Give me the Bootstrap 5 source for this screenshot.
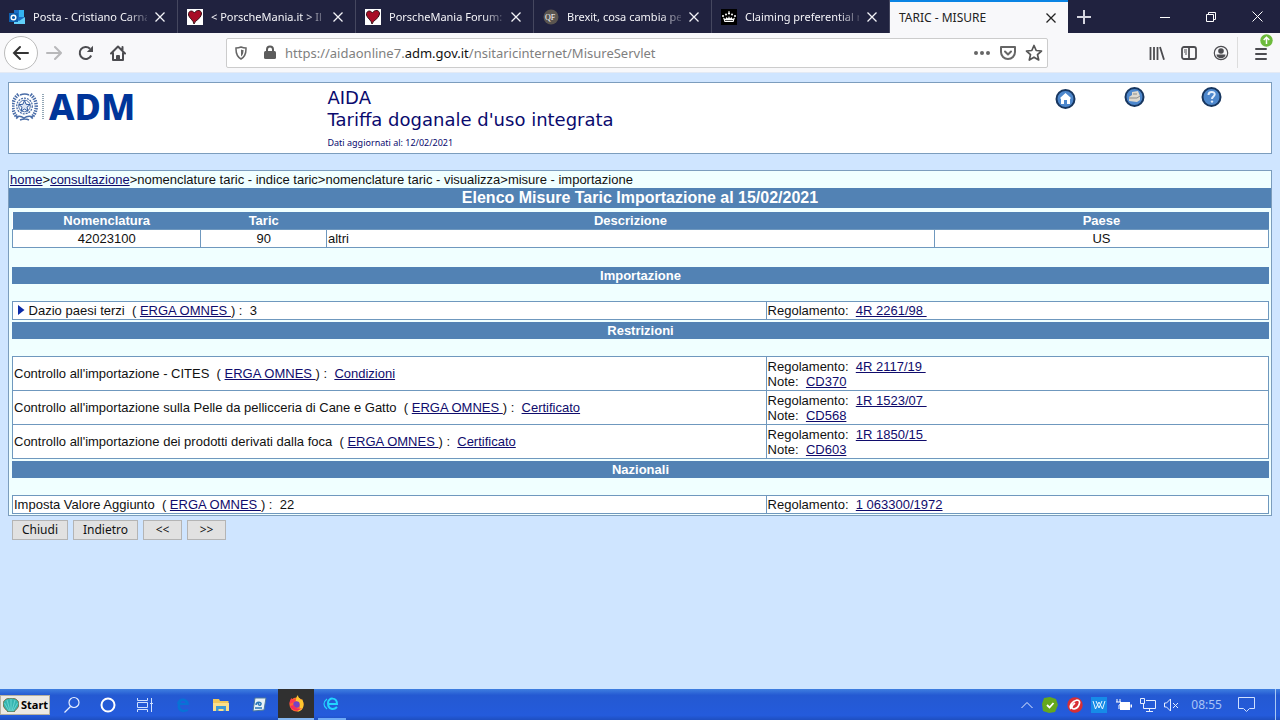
<!DOCTYPE html>
<html lang="it">
<head>
<meta charset="utf-8">
<meta name="viewport" content="width=device-width, initial-scale=1">
<title>TARIC - MISURE</title>
<link href="https://cdn.jsdelivr.net/npm/bootstrap@5.3.0/dist/css/bootstrap.min.css" rel="stylesheet">
<style>
  body { background: #cfe5ff; font: 13px/15px "Liberation Sans", Arial, sans-serif; color: #111; }
  button { font: inherit; color: inherit; }
  svg { display: block; flex: none; }
  .ui-font { font-family: "Noto Sans", "Segoe UI", sans-serif; }

  /* browser tabs */
  .tab-strip { background: #20223f; height: 33px; color: #f4f4f8; font-size: 11px; line-height: 16px; }
  .tab-item { flex: 0 1 178px; min-width: 0; padding: 0 12px 0 9px; border-right: 1px solid #45475f; }
  .tab-item.current { background: #f8f8fa; color: #222; border: 0; border-top: 2px solid #0a84e4; font-size: 12px; }
  .tab-title { flex: 1 1 0; min-width: 0; white-space: nowrap; -webkit-mask-image: linear-gradient(90deg, #000 82%, #0003); mask-image: linear-gradient(90deg, #000 82%, #0003); }
  .current .tab-title { -webkit-mask-image: none; mask-image: none; }
  .plain-btn { background: none; border: 0; padding: 0; display: flex; align-items: center; justify-content: center; }
  .win-btn { width: 46px; }

  /* address bar */
  .tool-bar { background: #f8f8fa; height: 40px; color: #4c4c50; border-bottom: 1px solid #e4eaf4; }
  .back-btn { width: 34px; height: 34px; border: 1px solid #bbb; border-radius: 50%; background: #fff; }
  .url-box { flex: 0 1 822px; min-width: 0; height: 30px; background: #fff; border: 1px solid #ccc; border-radius: 2px; color: #666; }
  .url-text { font-size: 13px; line-height: 20px; color: #808080; white-space: nowrap; }
  .url-text b { font-weight: 400; color: #111; }
  .divider { width: 1px; align-self: stretch; background: #ddd; }
  .update-dot { top: -12px; left: 6px; }

  /* page */
  .page-body { padding: 9px 8px 0; }
  .box-line { border: 1px solid #7c9dbd; }
  .site-head { background: #fff; height: 72px; color: #0a0a6e; font-family: "DejaVu Sans", Verdana, sans-serif; }
  .logo-col { width: 25%; padding: 10px 0 0 3px; }
  .logo-text { font: 800 36px/28px "Noto Sans", "Open Sans", sans-serif; color: #00359a; }
  .head-text { padding: 4px 0 0 3px; }
  .head-title { font-size: 18px; line-height: 22px; font-weight: 400; }
  .head-date { font: 9px/16px "Noto Sans", sans-serif; }
  .head-tools { padding: 4px 45px 0 0; }
  .crumbs { line-height: 17px; padding: 0 1px; }
  .measures { background: #f0ffff; margin-top: 16px; }
  .measures a { color: #100c6c; text-decoration: underline; }
  .title-band, .sub-band, .grid-table th { background: #5282b4; color: #fff; text-align: center; font-weight: 700; }
  .title-band { font-size: 16px; line-height: 20px; }
  .sub-band { font-size: 13px; line-height: 17px; }
  .inner { padding: 4px 2px 1px 3px; }
  .grid-table { width: 100%; table-layout: fixed; border-collapse: collapse; background: #fff; margin-bottom: 2px; }
  .grid-table:last-child { margin: 0; }
  .grid-table td { border: 1px solid #6f98be; padding: 1px; line-height: 15px; vertical-align: middle; }
  .grid-table th { line-height: 17px; padding: 0; }
  .note-rows tr { height: 34px; }
  .info-col { width: 40%; }
  .spacer { height: 17px; }
  .form-row { gap: 5px; padding: 4px; }
  .form-btn { background: #e1e1e1; border: 1px solid #b4b4b4; height: 20px; min-width: 39px; padding: 0 9px; font-size: 12px; line-height: 16px; }

  /* taskbar */
  .task-bar { height: 31px; background: linear-gradient(#3f7fe0, #2459d2 20%, #245bdc 85%, #1e4fc0); color: #dce8ff; }
  .start-btn { background: #ece9e4; border: 1px solid #b7b09f; height: 20px; color: #000; font: 700 11px/16px "Noto Sans", sans-serif; padding: 0 1px 0 2px; gap: 2px; }
  .task-app { width: 38px; align-self: stretch; }
  .task-app.narrow { width: 36px; }
  .task-app.active { background: #303030; border-bottom: 2px solid #84b6ee; width: 36px; }
  .task-app.running { border-bottom: 2px solid #70abf5; width: 28px; }
  .clock-text { font-size: 12px; color: #a9c4f5; }
  .desk-edge { width: 1px; align-self: stretch; background: #a9c8f4; }
</style>
</head>
<body class="d-flex flex-column min-vh-100">

<header class="ui-font">
  <nav class="tab-strip d-flex" aria-label="Schede">
    <div class="tab-item d-flex align-items-center gap-2">
      <svg width="16" height="16" viewBox="0 0 16 16"><path fill="#1b6fc5" d="M5 1h10v13H5z"/><path fill="#34b4f2" d="M10 1h5v7h-5z"/><path fill="#62d0fa" d="M5 9l5 3 6-4v7H5z"/><path fill="#0e5ead" d="M0 4h9v9H0z"/><circle cx="4.500" cy="8.500" r="2.300" fill="none" stroke="#fff" stroke-width="1.400"/></svg>
      <span class="tab-title">Posta - Cristiano Carna</span>
      <button class="plain-btn" aria-label="Chiudi scheda"><svg width="10" height="10" viewBox="0 0 10 10" stroke="currentColor" stroke-width="1.300"><path d="M.5.5l9 9m0-9l-9 9"/></svg></button>
    </div>
    <div class="tab-item d-flex align-items-center gap-2">
      <svg width="16" height="16" viewBox="0 0 16 16"><path fill="#fff" d="M0 0h16v16H0z"/><path fill="#a80c25" stroke="#3b1118" d="M7.500 4C5 .5 1 2 1.500 6c.4 3 5 5 5.500 9 1-4 7-5 7.500-10C15 1 9.500 0 7.500 4z"/></svg>
      <span class="tab-title">&lt; PorscheMania.it &gt; Il</span>
      <button class="plain-btn" aria-label="Chiudi scheda"><svg width="10" height="10" viewBox="0 0 10 10" stroke="currentColor" stroke-width="1.300"><path d="M.5.5l9 9m0-9l-9 9"/></svg></button>
    </div>
    <div class="tab-item d-flex align-items-center gap-2">
      <svg width="16" height="16" viewBox="0 0 16 16"><path fill="#fff" d="M0 0h16v16H0z"/><path fill="#a80c25" stroke="#3b1118" d="M7.500 4C5 .5 1 2 1.500 6c.4 3 5 5 5.500 9 1-4 7-5 7.500-10C15 1 9.500 0 7.500 4z"/></svg>
      <span class="tab-title">PorscheMania Forum:</span>
      <button class="plain-btn" aria-label="Chiudi scheda"><svg width="10" height="10" viewBox="0 0 10 10" stroke="currentColor" stroke-width="1.300"><path d="M.5.5l9 9m0-9l-9 9"/></svg></button>
    </div>
    <div class="tab-item d-flex align-items-center gap-2">
      <svg width="16" height="16" viewBox="0 0 16 16"><circle cx="8" cy="8" r="7.500" fill="#5a5550"/><text x="2" y="11" font-size="8" fill="#fff" font-family="Liberation Serif, serif">QF</text></svg>
      <span class="tab-title">Brexit, cosa cambia pe</span>
      <button class="plain-btn" aria-label="Chiudi scheda"><svg width="10" height="10" viewBox="0 0 10 10" stroke="currentColor" stroke-width="1.300"><path d="M.5.5l9 9m0-9l-9 9"/></svg></button>
    </div>
    <div class="tab-item d-flex align-items-center gap-2">
      <svg width="16" height="16" viewBox="0 0 16 16"><path fill="#000" d="M0 0h16v16H0z"/><g fill="#fff"><path d="M3.500 13L2 8.500l2.500 1.500L5.500 8 7 9.500 8 7l1 2.500L10.500 8l1 2L14 8.500 12.500 13z"/><circle cx="2" cy="7" r="1"/><circle cx="5" cy="5.500" r="1"/><circle cx="8" cy="4.500" r="1.100"/><circle cx="11" cy="5.500" r="1"/><circle cx="14" cy="7" r="1"/><path d="M7.500 2h1v2h-1z"/></g><path d="M4 11.500h8" stroke="#000" stroke-width=".7"/></svg>
      <span class="tab-title">Claiming preferential r</span>
      <button class="plain-btn" aria-label="Chiudi scheda"><svg width="10" height="10" viewBox="0 0 10 10" stroke="currentColor" stroke-width="1.300"><path d="M.5.5l9 9m0-9l-9 9"/></svg></button>
    </div>
    <div class="tab-item current d-flex align-items-center">
      <span class="tab-title">TARIC - MISURE</span>
      <button class="plain-btn" aria-label="Chiudi scheda"><svg width="10" height="10" viewBox="0 0 10 10" stroke="currentColor" stroke-width="1.300"><path d="M.5.5l9 9m0-9l-9 9"/></svg></button>
    </div>
    <button class="plain-btn px-2" aria-label="Nuova scheda"><svg width="16" height="16" viewBox="0 0 16 16" stroke="#d5d5df" stroke-width="2"><path d="M8 1v14M1 8h14"/></svg></button>
    <div class="d-flex ms-auto">
      <button class="plain-btn win-btn" aria-label="Riduci"><svg width="10" height="10" viewBox="0 0 10 10" stroke="#fff"><path d="M0 5.500h10"/></svg></button>
      <button class="plain-btn win-btn" aria-label="Ripristina"><svg width="10" height="10" viewBox="0 0 10 10" fill="none" stroke="#fff"><path d="M.5 2.500h7v7h-7zM2.500 2.500v-2h7v7h-2"/></svg></button>
      <button class="plain-btn win-btn" aria-label="Chiudi"><svg width="11" height="11" viewBox="0 0 11 11" stroke="#fff"><path d="M.5.5l10 10m0-10l-10 10"/></svg></button>
    </div>
  </nav>

  <div class="tool-bar d-flex align-items-center">
    <div class="d-flex align-items-center ps-1 pe-5 me-1">
      <button class="plain-btn back-btn me-2" aria-label="Indietro di una pagina"><svg width="18" height="16" viewBox="0 0 18 16" fill="none" stroke="#333" stroke-width="2" stroke-linecap="round"><path d="M2 8h14M8 2L2 8l6 6"/></svg></button>
      <button class="plain-btn me-3" aria-label="Avanti"><svg width="16" height="16" viewBox="0 0 16 16" fill="none" stroke="#b8b8ba" stroke-width="2" stroke-linecap="round"><path d="M1 8h14M9 2l6 6-6 6"/></svg></button>
      <button class="plain-btn me-3" aria-label="Ricarica"><svg width="16" height="16" viewBox="0 0 16 16"><path d="M13.200 10.500A6 6 0 1 1 12 3.700" fill="none" stroke="#4c4c50" stroke-width="2"/><path d="M15 .8v6.200H8.800z" fill="#4c4c50"/></svg></button>
      <button class="plain-btn" aria-label="Pagina iniziale"><svg width="16" height="16" viewBox="0 0 16 16" fill="none" stroke="#4c4c50" stroke-width="2" stroke-linejoin="round" stroke-linecap="round"><path d="M1 8.500L8 1.500l7 7M3 8v7h10V8M12.500 2v3"/><path d="M7 15v-4h2v4" /></svg></button>
    </div>
    <div class="url-box d-flex align-items-center ps-2 pe-1 ms-5">
      <svg width="12" height="14" viewBox="0 0 12 14"><path d="M6 1c2 .8 3.500 1 5 1 .2 5-.7 8.500-5 11C1.700 10.500.8 7 1 2c1.500 0 3-.2 5-1z" fill="none" stroke="#666" stroke-width="1.500"/><path d="M6 3.500c1 .4 1.700.5 2.500.6 0 3-.5 4.900-2.500 6.300z" fill="#666"/></svg>
      <svg class="ms-3" width="14" height="15" viewBox="0 0 14 15"><rect x="1" y="6" width="12" height="8" rx="1.500" fill="#5c5c5c"/><path d="M4 7V4.500a3 3 0 0 1 6 0V7" fill="none" stroke="#5c5c5c" stroke-width="2"/></svg>
      <span class="url-text ms-2 flex-grow-1">https://aidaonline7.<b>adm.gov.it</b>/nsitaricinternet/MisureServlet</span>
      <button class="plain-btn me-2" aria-label="Azioni"><svg width="18" height="16" viewBox="0 0 18 16" fill="#666"><circle cx="3" cy="8" r="2"/><circle cx="9" cy="8" r="2"/><circle cx="15" cy="8" r="2"/></svg></button>
      <button class="plain-btn me-2" aria-label="Pocket"><svg width="18" height="16" viewBox="0 0 18 16" fill="none" stroke="#666" stroke-width="2" stroke-linecap="round" stroke-linejoin="round"><path d="M2 2h14v5a7 7 0 0 1-14 0zM6 6.500l3 3 3-3"/></svg></button>
      <button class="plain-btn" aria-label="Segnalibro"><svg width="18" height="18" viewBox="0 0 18 18" fill="none" stroke="#555" stroke-width="1.700" stroke-linejoin="round"><path d="M9 1.500l2.200 5 5.300.5-4 3.600 1.200 5.400L9 13.200 4.300 16l1.200-5.400-4-3.600 5.300-.5z"/></svg></button>
    </div>
    <div class="d-flex align-items-center align-self-stretch ms-auto pe-2">
      <button class="plain-btn me-3" aria-label="Libreria"><svg width="16" height="16" viewBox="0 0 16 16" fill="none" stroke="#4c4c50" stroke-width="1.800"><path d="M1.500 2v13M5 2v13M8.500 2v13M11 2l4 12.800"/></svg></button>
      <button class="plain-btn me-3" aria-label="Barra laterale"><svg width="16" height="16" viewBox="0 0 16 16" fill="none" stroke="#4c4c50" stroke-width="1.800"><rect x="1" y="2" width="14" height="12" rx="2"/><path d="M8 2v12"/><path stroke-width="1" d="M3 5h3M3 7h3M4 9h2"/></svg></button>
      <button class="plain-btn me-2" aria-label="Account"><svg width="16" height="16" viewBox="0 0 16 16"><circle cx="8" cy="8" r="6.700" fill="none" stroke="#4c4c50" stroke-width="1.200"/><circle cx="8" cy="6" r="2.800" fill="#4c4c50"/><path d="M3.500 9.500h9c0 5-9 5-9 0z" fill="#4c4c50"/></svg></button>
      <span class="divider my-1 me-3"></span>
      <button class="plain-btn position-relative me-1" aria-label="Menu"><svg width="14" height="14" viewBox="0 0 14 14" stroke="#4c4c50" stroke-width="2" stroke-linecap="round"><path d="M2 3h10M2 8h10M2 13h10"/></svg>
        <svg class="position-absolute update-dot" width="13" height="13" viewBox="0 0 13 13"><circle cx="6.500" cy="6.500" r="6.200" fill="#6dbb3c"/><path d="M6.500 10V3.500M3.700 6l2.800-2.800L9.300 6" fill="none" stroke="#fff" stroke-width="1.500"/></svg></button>
    </div>
  </div>
</header>

<main class="page-body flex-grow-1">
  <div class="site-head box-line d-flex align-items-start">
    <div class="logo-col d-flex">
      <svg width="33" height="29" viewBox="0 0 33 29"><g fill="none" stroke="#4a6da8"><circle cx="12.500" cy="13" r="7.800" stroke-width="1.300" stroke-dasharray="2 1"/><circle cx="12.500" cy="13" r="5.800"/><path d="M6.500 1.500C-1 7-1 19 6 25M18.500 1.500C26 7 26 19 19 25" stroke-width="3.500" stroke-dasharray="1.500 1"/><path d="M4 24q4-2 8 1 4-3 9-1M8 27q5-2 9 0M8 2q5-2 9 0" stroke-width="1.500"/></g><path d="M12.500 7.500l1.600 3.800 4 .3-3.100 2.600 1 4-3.500-2.200L9 18.200l1-4-3.100-2.600 4-.3z" fill="#dbe4f4" stroke="#2b569d"/><path d="M31 1v26" stroke="#93a7b5" stroke-width="2" stroke-dasharray="1 1"/></svg>
      <span class="logo-text ps-1">ADM</span>
    </div>
    <div class="head-text flex-grow-1">
      <h1 class="head-title m-0">AIDA<br>Tariffa doganale d'uso integrata</h1>
      <p class="head-date m-0 mt-1">Dati aggiornati al: 12/02/2021</p>
    </div>
    <nav class="head-tools d-flex gap-5" aria-label="Strumenti">
      <a href="#home" aria-label="Home"><svg width="21" height="23" viewBox="0 0 21 23"><circle cx="10.500" cy="12" r="9" fill="#4d87cc" stroke="#17365f" stroke-width="2"/><path fill="#fff" d="M10.500 6l5.500 5-1 1v5h-3v-4H9v4H6v-5l-1-1z"/></svg></a>
      <a href="#stampa" aria-label="Stampa"><svg width="21" height="21" viewBox="0 0 21 21"><circle cx="10.500" cy="10" r="9" fill="#4d87cc" stroke="#17365f" stroke-width="2"/><path fill="#ded9cf" d="M8 5l6-1 2 5v4l-3 2-8-1v-4l3-2z"/><path d="M5 11h8l3-2M9 7h4" stroke="#8b8b89" fill="none"/></svg></a>
      <a class="ms-2 me-1" href="#aiuto" aria-label="Aiuto"><svg width="21" height="21" viewBox="0 0 21 21"><circle cx="10.500" cy="10" r="9" fill="#4d87cc" stroke="#17365f" stroke-width="2"/><path d="M7.500 8c0-4 6.500-4 6.200-.5C13.500 9.500 11 9.500 11 12" fill="none" stroke="#e3eefc" stroke-width="2"/><circle cx="11" cy="14.600" r="1.200" fill="#e3eefc"/></svg></a>
    </nav>
  </div>

  <section class="measures box-line">
    <nav class="crumbs" aria-label="Percorso"><a href="#home">home</a>&gt;<a href="#consultazione">consultazione</a>&gt;nomenclature taric - indice taric&gt;nomenclature taric - visualizza&gt;misure - importazione</nav>
    <h2 class="title-band m-0">Elenco Misure Taric Importazione al 15/02/2021</h2>
    <div class="inner">
      <table class="grid-table text-center">
        <colgroup><col style="width:15%"><col style="width:10%"><col style="width:48.4%"><col></colgroup>
        <thead><tr><th>Nomenclatura</th><th>Taric</th><th>Descrizione</th><th>Paese</th></tr></thead>
        <tbody><tr><td>42023100</td><td>90</td><td class="text-start">altri</td><td>US</td></tr></tbody>
      </table>
      <div class="spacer"></div>
      <h3 class="sub-band m-0">Importazione</h3>
      <div class="spacer"></div>
      <table class="grid-table">
        <tbody><tr><td><svg class="d-inline-block align-baseline ms-1" width="7" height="10" viewBox="0 0 7 10"><path d="M0 0l6.500 5L0 10z" fill="#0c2ca8"/></svg> Dazio paesi terzi &nbsp;( <a href="#erga">ERGA OMNES&nbsp;</a>) : &nbsp;3</td><td class="info-col">Regolamento: &nbsp;<a href="#r1">4R 2261/98&nbsp;</a></td></tr></tbody>
      </table>
      <h3 class="sub-band m-0">Restrizioni</h3>
      <div class="spacer"></div>
      <table class="grid-table note-rows">
        <tbody>
          <tr><td>Controllo all'importazione - CITES &nbsp;( <a href="#erga">ERGA OMNES&nbsp;</a>) : &nbsp;<a href="#cond">Condizioni</a></td><td class="info-col">Regolamento: &nbsp;<a href="#r2">4R 2117/19&nbsp;</a><br>Note: &nbsp;<a href="#n1">CD370</a></td></tr>
          <tr><td>Controllo all'importazione sulla Pelle da pellicceria di Cane e Gatto &nbsp;( <a href="#erga">ERGA OMNES&nbsp;</a>) : &nbsp;<a href="#cert">Certificato</a></td><td>Regolamento: &nbsp;<a href="#r3">1R 1523/07&nbsp;</a><br>Note: &nbsp;<a href="#n2">CD568</a></td></tr>
          <tr><td>Controllo all'importazione dei prodotti derivati dalla foca &nbsp;( <a href="#erga">ERGA OMNES&nbsp;</a>) : &nbsp;<a href="#cert">Certificato</a></td><td>Regolamento: &nbsp;<a href="#r4">1R 1850/15&nbsp;</a><br>Note: &nbsp;<a href="#n3">CD603</a></td></tr>
        </tbody>
      </table>
      <h3 class="sub-band m-0">Nazionali</h3>
      <div class="spacer"></div>
      <table class="grid-table">
        <tbody><tr><td>Imposta Valore Aggiunto &nbsp;( <a href="#erga">ERGA OMNES&nbsp;</a>) : &nbsp;22</td><td class="info-col">Regolamento: &nbsp;<a href="#r5">1 063300/1972</a></td></tr></tbody>
      </table>
    </div>
  </section>
  <div class="form-row d-flex ui-font">
    <button class="form-btn">Chiudi</button>
    <button class="form-btn">Indietro</button>
    <button class="form-btn">&lt;&lt;</button>
    <button class="form-btn">&gt;&gt;</button>
  </div>
</main>

<footer class="task-bar ui-font d-flex align-items-center">
  <button class="start-btn d-flex align-items-center"><svg width="16" height="14" viewBox="0 0 16 14"><path d="M8 0c5 0 8 3 8 6 0 4-4 6-5 8H5C4 12 0 10 0 6c0-3 3-6 8-6z" fill="#35b5b0" stroke="#7b6e45"/><path d="M8 1v12M4 2l3 11M12 2L9 13M1.500 5L6 13M14.500 5L10 13" stroke="#7fe0dc" stroke-width=".7"/></svg>Start</button>
  <button class="plain-btn task-app narrow ms-1" aria-label="Cerca"><svg width="18" height="18" viewBox="0 0 18 18" fill="none" stroke="#e6eeff" stroke-width="1.200"><circle cx="11" cy="6.500" r="5"/><path d="M7.500 10.500L1.500 16.500"/></svg></button>
  <button class="plain-btn task-app narrow" aria-label="Cortana"><svg width="16" height="16" viewBox="0 0 16 16"><circle cx="8" cy="8" r="6.500" fill="none" stroke="#fff" stroke-width="2"/></svg></button>
  <button class="plain-btn task-app" aria-label="Visualizzazione attività"><svg width="18" height="16" viewBox="0 0 18 16" fill="none" stroke="#cfe0ff"><path d="M1.500 1v2.500h10V1M1.500 15v-2.500h10V15M1.500 5.500h10v5h-10zM15.500 1v14M14 6.500h3"/></svg></button>
  <button class="plain-btn task-app" aria-label="Edge"><svg width="14" height="16" viewBox="0 0 14 16"><path d="M1 7c1-8 12-7 12 1H4c0 6 6 5 8 4v2C6 17 0 14 2 7" fill="#0872d6"/><path d="M4.500 6h5c-1-3-4-3-5 0z" fill="#245bdc"/></svg></button>
  <button class="plain-btn task-app" aria-label="Esplora file"><svg width="16" height="14" viewBox="0 0 16 14"><path d="M0 1h6l1 2h8.500v10H0z" fill="#f1c75b"/><path d="M0 5h16v8H0z" fill="#fbdf8c"/><path d="M3 13V8h10v5h-2.500v-2h-5v2z" fill="#3e9ad6"/></svg></button>
  <button class="plain-btn task-app" aria-label="Editor"><svg width="16" height="16" viewBox="0 0 16 16"><path d="M4 1h11l-2 12-11 1z" fill="#e7f1f7" stroke="#4c789a"/><path d="M5 8c0-4 6-3 5-1-1 3-4 0-2-1M4 11h7" stroke="#2876b8" stroke-width="1.500" fill="none"/></svg></button>
  <button class="plain-btn task-app active" aria-label="Firefox"><svg width="17" height="17" viewBox="0 0 17 17"><circle cx="8.500" cy="9.500" r="7" fill="#ff6a2b"/><path d="M10 0c0 3 2 3 3 5l1-1c3 5 2 12-5 13 5-4 3-9-1-11 0-2 0-4 2-6z" fill="#ffc62e"/><path d="M1.500 9c0-3 1-5 2-6l1 2 3-1-1 3z" fill="#ff3b51"/><circle cx="8.500" cy="9.500" r="3.200" fill="#7442c7"/><path d="M2 11c2 5 9 6 12 2-4 2-7 0-8-3z" fill="#f52d5c"/></svg></button>
  <button class="plain-btn task-app running ms-1" aria-label="Internet Explorer"><svg width="18" height="16" viewBox="0 0 18 16" fill="none" stroke="#22d4ff" stroke-width="2"><path d="M5 8h9c0-7-9-7-9-1 0 7 6 7 9 4"/><path stroke-width="1.200" d="M4 3C0 6 0 10 4 13"/></svg></button>
  <div class="d-flex align-items-center align-self-stretch ms-auto">
    <svg width="12" height="8" viewBox="0 0 12 8" fill="none" stroke="#e6eeff"><path d="M.5 7L6 1.500 11.500 7"/></svg>
    <svg class="ms-2" width="18" height="16" viewBox="0 0 18 16"><path d="M3 1l6-1 6 2 2 6-3 7-6 1-6-2-1-7z" fill="#65a81c"/><path d="M6 8l2.500 2.500L12.500 6" fill="none" stroke="#fff" stroke-width="1.800"/></svg>
    <svg class="ms-2" width="16" height="16" viewBox="0 0 16 16"><circle cx="8" cy="8" r="7.700" fill="#d82f35"/><path d="M4 12c-2-3 1-8 6-9 5 0 2 8-3 9-3 0-3-3 1-6" fill="none" stroke="#fff" stroke-width="1.700"/></svg>
    <svg class="ms-2" width="16" height="16" viewBox="0 0 16 16"><path d="M0 0h16v16H0z" fill="#168be8"/><path d="M2 4l2.500 8L8 5l3.500 7L14 4M5 4l3 7 3-7" fill="none" stroke="#e6f6ff"/></svg>
    <svg class="ms-2" width="17" height="14" viewBox="0 0 17 14"><path d="M5 4h10v8H5zM15.500 6.500H17v3h-1.500z" fill="#fff"/><path d="M2 1v3M5 1v3M1 4h5v2l-2 1v4" fill="none" stroke="#fff"/></svg>
    <svg class="ms-2" width="16" height="14" viewBox="0 0 16 14" fill="none" stroke="#e6eeff"><path d="M6 2.500h9.500v8H3.500V6M.5.5h4v5h-4zM9.500 10.500v3M6 13.500h7"/></svg>
    <svg class="ms-2" width="15" height="14" viewBox="0 0 15 14" fill="none" stroke="#e6eeff"><path d="M.5 5h2l4-4v12l-4-4h-2zM9 5l5 5m0-5l-5 5"/></svg>
    <span class="ms-2 ps-1 text-nowrap clock-text">08:55</span>
    <svg class="ms-3 me-3" width="17" height="17" viewBox="0 0 17 17" fill="none" stroke="#cfe0ff"><path d="M.5 1.500h16v11h-5l-3 3-3-3h-5z"/></svg>
    <span class="desk-edge ms-1 me-1"></span>
  </div>
</footer>

<script src="https://cdn.jsdelivr.net/npm/bootstrap@5.3.0/dist/js/bootstrap.bundle.min.js"></script>
</body>
</html>
